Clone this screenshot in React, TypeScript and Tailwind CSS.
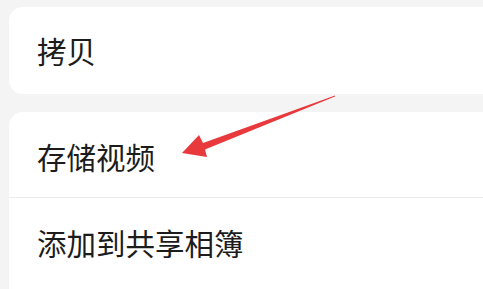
import React from "react";

export default function App() {
  return (
    <div
      className="relative h-[289px] w-[483px] overflow-hidden bg-[#f4f4f4] pl-[9px] pt-[7px]"
      style={{ fontFamily: '"Noto Sans CJK SC", "Noto Sans", sans-serif' }}
    >
      <div className="flex h-[87px] items-center rounded-l-[14px] bg-white pl-[28px] text-[29.5px] leading-none text-[#1c1c1c]">
        拷贝
      </div>
      <div className="mt-[18px] rounded-tl-[14px] bg-white text-[29.5px] leading-none text-[#1c1c1c]">
        <div className="flex h-[86px] items-center border-b border-[#ececec] pl-[28px] pt-[4px]">
          存储视频
        </div>
        <div className="flex h-[86px] items-center pl-[28px] pt-[4px]">
          添加到共享相簿
        </div>
        <div className="h-[20px]" />
      </div>
      <svg
        className="pointer-events-none absolute left-0 top-0"
        width="483"
        height="289"
        viewBox="0 0 483 289"
      >
        <polygon
          points="182,153 199,135 203,143 335,95.5 335,96.5 205,149.5 207,157"
          fill="#e8393c"
        />
      </svg>
    </div>
  );
}
